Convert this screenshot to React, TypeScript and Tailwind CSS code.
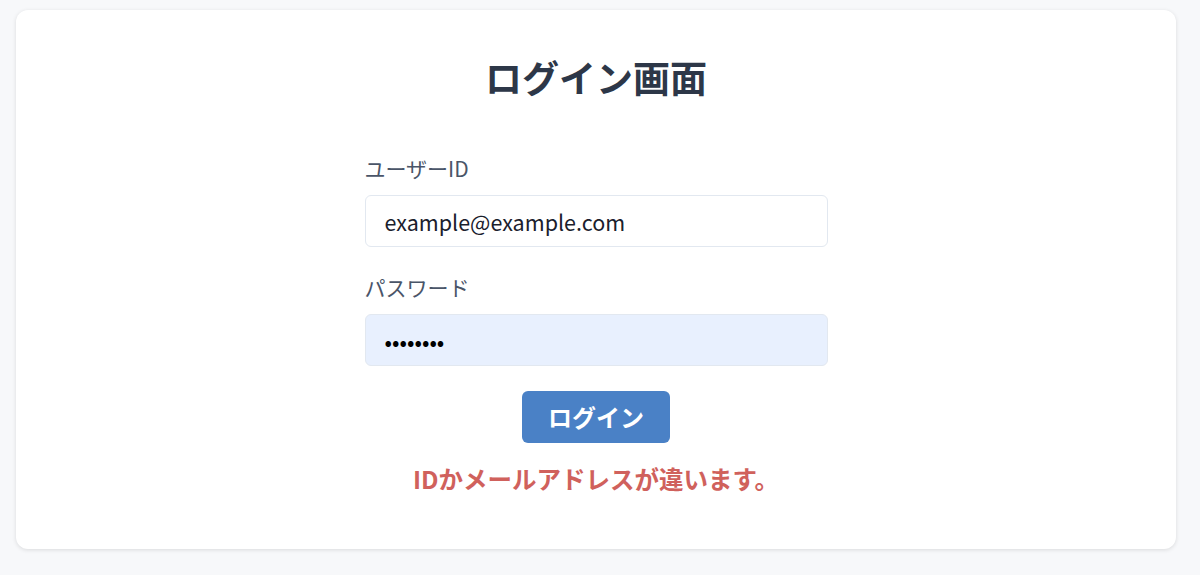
import React from "react";

const App: React.FC = () => {
  const [userId, setUserId] = React.useState("example@example.com");
  const [password, setPassword] = React.useState("password");

  return (
    <div
      className="min-h-[575px] bg-[#f7f8fa] pl-4 pr-6 pt-[10px] pb-[26px]"
      style={{ fontFamily: '"Noto Sans CJK JP", "Noto Sans", sans-serif' }}
    >
      <div className="h-[539px] rounded-xl bg-white shadow-[0_1px_4px_rgba(0,0,0,0.12)] pt-[37px]">
        <h1 className="text-center text-[37px] font-bold leading-[60px] text-[#2d3748]">
          ログイン画面
        </h1>

        <form className="mx-auto mt-[46px] w-[463px]" onSubmit={(e) => e.preventDefault()}>
          <label className="block text-[21px] leading-[30px] text-[#4a5568]">ユーザーID</label>
          <input
            type="text"
            value={userId}
            onChange={(e) => setUserId(e.target.value)}
            className="mt-[12px] block h-[52px] w-full rounded-md border border-[#e2e8f0] bg-white px-[19px] text-[21.5px] text-[#1a202c] outline-none"
          />

          <label className="mt-[25px] block text-[21px] leading-[30px] text-[#4a5568]">パスワード</label>
          <input
            type="password"
            value={password}
            onChange={(e) => setPassword(e.target.value)}
            className="mt-[12px] block h-[52px] w-full rounded-md border border-[#e2e8f0] bg-[#e8f0fe] px-[19px] text-[22px] text-black outline-none"
          />

          <div className="mt-[25px] flex justify-center">
            <button
              type="submit"
              className="h-[52px] w-[148px] rounded-md bg-[#4a81c6] text-[24px] font-bold text-white"
            >
              ログイン
            </button>
          </div>

          <p className="mt-[18px] text-center text-[24.5px] font-bold text-[#d0615c]">
            IDかメールアドレスが違います。
          </p>
        </form>
      </div>
    </div>
  );
};

export default App;
